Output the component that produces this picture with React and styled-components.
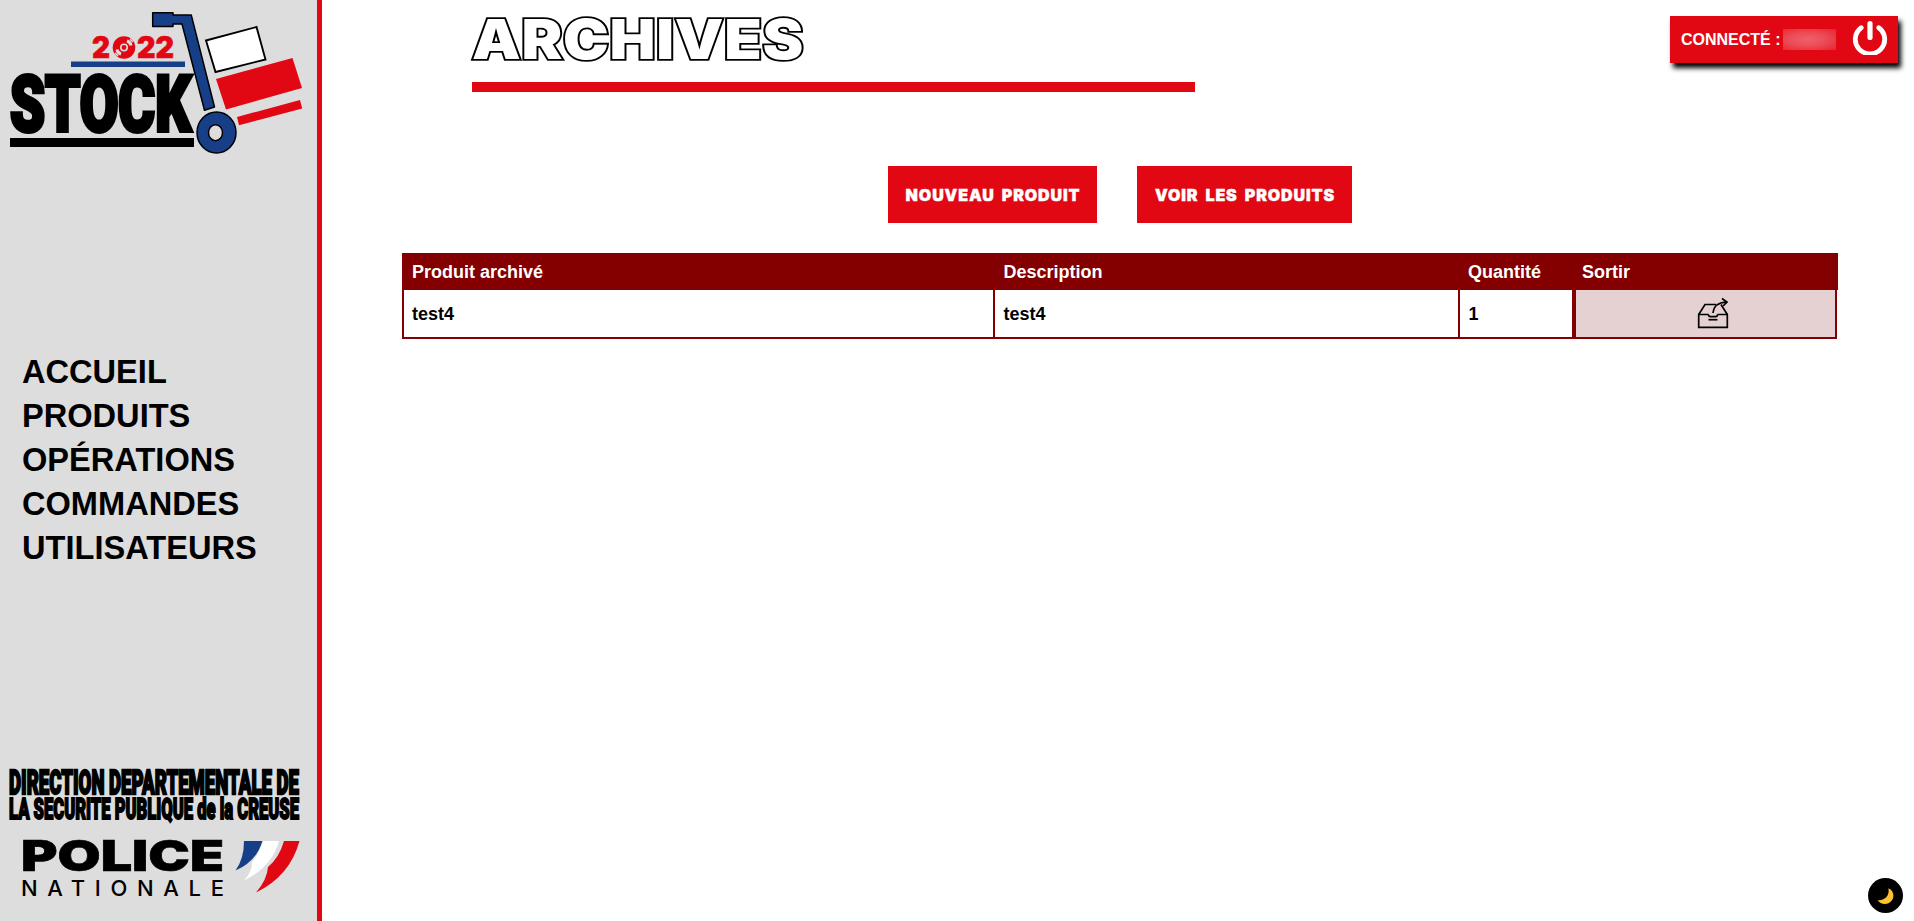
import React from "react";
import styled, { createGlobalStyle } from "styled-components";

const RED = "#e10814";
const MAROON = "#840000";
const BLUE = "#173f87";

const GlobalStyle = createGlobalStyle`
  * { box-sizing: border-box; }
  body {
    margin: 0;
    background: #fff;
    color: #000;
    font-family: "Liberation Sans", Arial, sans-serif;
    overflow: hidden;
  }
`;

const Page = styled.div`
  display: flex;
  height: 100vh;
`;

const Sidebar = styled.aside`
  flex: none;
  display: flex;
  flex-direction: column;
  justify-content: space-between;
  width: 322px;
  background: #ddd;
  border-right: 5px solid ${RED};
`;

const Artwork = styled.svg`
  display: block;
  flex: none;
`;

const LogoText = styled.text`
  font-family: ${(p) => p.$family || "Inter"}, "Liberation Sans", sans-serif;
  font-weight: ${(p) => p.$weight || 900};
  font-size: ${(p) => p.$size}px;
  fill: ${(p) => p.$color || "#000"};
  stroke: ${(p) => p.$color || "#000"};
  stroke-width: ${(p) => p.$stroke || 0}px;
  vector-effect: non-scaling-stroke;
`;

const Nav = styled.nav`
  display: flex;
  flex-direction: column;
  padding: 0 0 1px 22px;
`;

const NavLink = styled.a`
  font-size: 32.6px;
  font-weight: 700;
  line-height: 44px;
  color: #000;
  text-decoration: none;
`;

const Main = styled.main`
  flex: 1;
  display: flex;
  flex-direction: column;
  padding-left: 80px;
`;

const Header = styled.header`
  display: flex;
  justify-content: space-between;
  align-items: flex-start;
  height: 166px;
  padding: 0 16px 0 70px;
`;

const TitleBlock = styled.div`
  width: 723px;
  height: 92px;
  border-bottom: 10px solid ${RED};
`;

const Title = styled.h1`
  width: max-content;
  margin: 0;
  font-family: Inter, sans-serif;
  font-size: 54.5px;
  font-weight: 900;
  line-height: 78px;
  letter-spacing: 0.6px;
  color: #fff;
  -webkit-text-stroke: 3.6px #000;
  paint-order: stroke fill;
  transform: scaleX(1.125);
  transform-origin: left center;
`;

const Account = styled.div`
  display: flex;
  align-items: center;
  width: 228px;
  height: 47px;
  margin-top: 16px;
  padding-left: 11px;
  background: ${RED};
  box-shadow: 3px 5px 5px #000;
  color: #fff;
  font-size: 16px;
  font-weight: 700;
  white-space: nowrap;
`;

const HiddenName = styled.span`
  width: 53px;
  height: 21px;
  margin: 0 16px 0 2px;
  background: radial-gradient(ellipse at 45% 50%, #f0606b 0%, #ec4c57 45%, #e62430 100%);
`;

const Power = styled.svg`
  margin-bottom: 6px;
`;

const Actions = styled.div`
  display: flex;
  gap: 40px;
  margin-left: 486px;
`;

const Action = styled.button`
  width: ${(p) => p.$width}px;
  height: 57px;
  padding: 0 0 0 1px;
  border: 0;
  background: ${RED};
  color: #fff;
  font-family: Inter, sans-serif;
  font-size: 16px;
  font-weight: 900;
  letter-spacing: 0.9px;
  word-spacing: 3px;
  -webkit-text-stroke: 0.4px #fff;
  white-space: nowrap;
`;

const Table = styled.div`
  width: 1436px;
  margin-top: 30px;
  font-size: 18px;
  font-weight: 700;
`;

const HeadRow = styled.div`
  display: grid;
  grid-template-columns: 591.5px 464.5px 114px 1fr;
  align-items: center;
  height: 37px;
  padding-top: 2px;
  background: ${MAROON};
  color: #fff;
`;

const HeadCell = styled.span`
  padding-left: 10px;
`;

const Row = styled.div`
  display: grid;
  grid-template-columns: 591px 465px 114px 1fr;
  width: 1435px;
  height: 49px;
  border-bottom: 2px solid ${MAROON};
  border-right: 2px solid ${MAROON};
`;

const Cell = styled.div`
  display: flex;
  align-items: center;
  padding: 2px 0 0 8.5px;
  border-left: 2px solid ${MAROON};

  &:first-child {
    padding-left: 8px;
  }
`;

const OutCell = styled.div`
  display: flex;
  align-items: center;
  justify-content: center;
  padding: 0 0 1px 14px;
  border-left: 4px solid ${MAROON};
  background: #e5d1d2;
`;

const ThemeToggle = styled.button`
  position: fixed;
  right: 11px;
  bottom: 8px;
  width: 35px;
  height: 35px;
  padding: 0;
  border: 0;
  border-radius: 50%;
  background: #000;
`;

function StockLogo() {
  return (
    <Artwork width="317" height="170" viewBox="0 0 317 170">
      <LogoText x="92" y="58" $size={29.5} $color={RED} $stroke={0.6} textLength="18" lengthAdjust="spacingAndGlyphs">2</LogoText>
      <LogoText x="137" y="58" $size={29.5} $color={RED} $stroke={0.6} textLength="37" lengthAdjust="spacingAndGlyphs">22</LogoText>
      <circle cx="124" cy="47.5" r="11.3" fill={RED} />
      <circle cx="124" cy="47.5" r="3.2" fill="none" stroke="#ddd" strokeWidth="1.6" />
      <g fill="none" stroke="#ddd" strokeWidth="3">
        <path d="M127 41Q130.500 42 131 45.500" />
        <path d="M121 54Q117.500 53 117 49.500" />
      </g>
      <path d="M130 39l3 3M115 53l3 3" stroke="#ddd" strokeWidth="1.6" />
      <path d="M71 61.500h114v5.500H71z" fill={BLUE} />
      <LogoText transform="translate(10 130.800) scale(1 1.430)" $family="Roboto" $size={55} $stroke={3.6} textLength="181" lengthAdjust="spacingAndGlyphs">STOCK</LogoText>
      <path d="M10 138h184v9H10z" />
      <path d="M152.700 12.800h20.300v2.300h18.300L214.500 107l-10 3.200L182 24h-9v2.500h-20.300z" fill={BLUE} stroke="#000" strokeWidth="1.500" strokeLinejoin="round" />
      <path d="M206 40.500l50.500-13.500 9 32.500-50 12.500z" fill="#fff" stroke="#000" strokeWidth="1.900" />
      <path d="M216 79l76.500-21 9.500 30-76 21.500z" fill={RED} />
      <path d="M237 117l63-17 2.200 8.500-63.200 16.700z" fill={RED} />
      <ellipse cx="216.500" cy="132.500" rx="19.500" ry="20.500" fill={BLUE} stroke="#000" strokeWidth="1.500" />
      <ellipse cx="215.500" cy="132.700" rx="7" ry="8" fill="#ddd" stroke="#000" strokeWidth="1.500" />
    </Artwork>
  );
}

function PoliceLogo() {
  return (
    <Artwork width="317" height="171" viewBox="0 0 317 171">
      <LogoText transform="translate(9 44) scale(1 1.960)" $family="Roboto" $size={17.4} $stroke={1.8} textLength="290" lengthAdjust="spacingAndGlyphs">DIRECTION DEPARTEMENTALE DE</LogoText>
      <LogoText transform="translate(9 69.200) scale(1 1.900)" $family="Roboto" $size={15.2} $stroke={1.5} textLength="290" lengthAdjust="spacingAndGlyphs">LA SECURITE PUBLIQUE de la CREUSE</LogoText>
      <LogoText x="21" y="121" $size={42} $stroke={0.6} textLength="203" lengthAdjust="spacingAndGlyphs">POLICE</LogoText>
      <LogoText x="21" y="146" $size={22} $weight={500} textLength="203">NATIONALE</LogoText>
      <path d="M244 91h18.500Q256 112 235.500 120.500Q244 109 244 91z" fill={BLUE} />
      <path d="M263 91h16Q272 117 244 130.500Q252 122 252 112Q259 104 263 91z" fill="#fff" />
      <path d="M284 91h15.500Q290 126 256 142.500Q267 130 268 117Q279 108 284 91z" fill={RED} />
    </Artwork>
  );
}

function PowerIcon() {
  return (
    <Power width="36" height="36" viewBox="0 0 36 36" fill="none" stroke="#fff" strokeWidth="4.800" strokeLinecap="round">
      <path d="M9.200 8.700A14.700 14.500 0 1 0 26.800 8.700" />
      <path d="M18 4.700v13.800" strokeWidth="5.200" />
    </Power>
  );
}

function OutboxIcon() {
  return (
    <svg width="32" height="32" viewBox="0 0 32 32" fill="none" stroke="#000" strokeWidth="1.700">
      <path d="M1.700 17.500v12.800h28.600V17.500" />
      <path d="M1 17.500h10.500M20.500 17.500H31" />
      <path d="M1.700 17.500L8 7.500h11M24 7.500L30.300 17.500" />
      <path d="M11.500 17.500c0 1.800.5 2.100 2 2.100h5c1.500 0 2-.3 2-2.100" />
      <path d="M11.500 22.700h9" />
      <path d="M16 16c.5-6 5-10.500 13.500-11M25 1.500l5 3.500-4 4" />
    </svg>
  );
}

const links = ["ACCUEIL", "PRODUITS", "OPÉRATIONS", "COMMANDES", "UTILISATEURS"];

export default function App() {
  return (
    <Page>
      <GlobalStyle />
      <Sidebar>
        <StockLogo />
        <Nav>
          {links.map((label) => (
            <NavLink key={label}>{label}</NavLink>
          ))}
        </Nav>
        <PoliceLogo />
      </Sidebar>
      <Main>
        <Header>
          <TitleBlock>
            <Title>ARCHIVES</Title>
          </TitleBlock>
          <Account>
            CONNECTÉ :
            <HiddenName />
            <PowerIcon />
          </Account>
        </Header>
        <Actions>
          <Action $width={209}>NOUVEAU PRODUIT</Action>
          <Action $width={215}>VOIR LES PRODUITS</Action>
        </Actions>
        <Table>
          <HeadRow>
            <HeadCell>Produit archivé</HeadCell>
            <HeadCell>Description</HeadCell>
            <HeadCell>Quantité</HeadCell>
            <HeadCell>Sortir</HeadCell>
          </HeadRow>
          <Row>
            <Cell>test4</Cell>
            <Cell>test4</Cell>
            <Cell>1</Cell>
            <OutCell>
              <OutboxIcon />
            </OutCell>
          </Row>
        </Table>
      </Main>
      <ThemeToggle aria-label="Thème">
        <svg width="35" height="35" viewBox="0 0 35 35">
          <path d="M20.500 10.300C27 13 27 22 21 25c-4 2-9 1-11.500-3C14 23 22 20 20.500 10.300z" fill="#fdc02f" />
        </svg>
      </ThemeToggle>
    </Page>
  );
}
